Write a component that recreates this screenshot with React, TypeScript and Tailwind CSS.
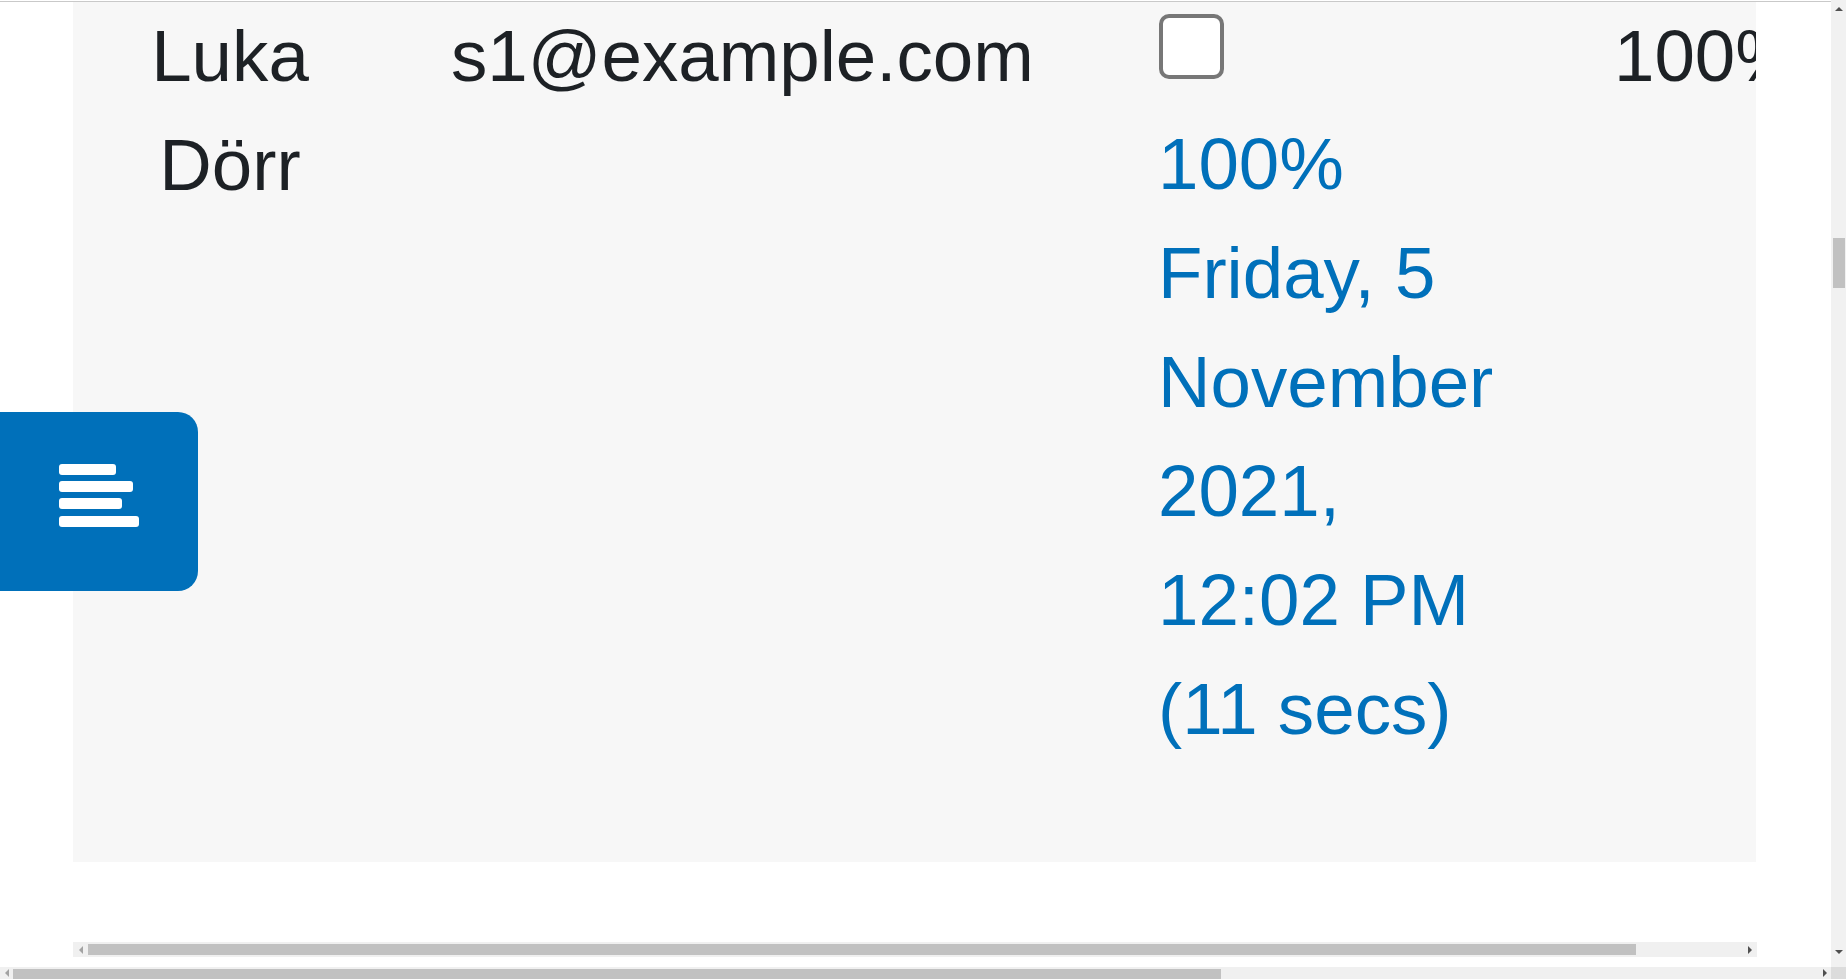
import React from "react";

function Arrow({ dir, color }: { dir: "up" | "down" | "left" | "right"; color: string }) {
  const pts =
    dir === "up"
      ? "0,4 4,0 8,4"
      : dir === "down"
      ? "0,0 8,0 4,4"
      : dir === "left"
      ? "4,0 4,8 0,4"
      : "0,0 0,8 4,4";
  const w = dir === "up" || dir === "down" ? 8 : 4;
  const h = dir === "up" || dir === "down" ? 4 : 8;
  return (
    <svg width={w} height={h} viewBox={`0 0 ${w} ${h}`}>
      <polygon points={pts} fill={color} />
    </svg>
  );
}

export default function App() {
  return (
    <div className="relative flex h-[979px] w-[1846px] flex-col overflow-hidden bg-white font-['Liberation_Sans',Arial,sans-serif]">
      <div className="flex h-[967px]">
        {/* main viewport */}
        <div className="relative flex w-[1831px] flex-col">
          <div className="h-px bg-white" />
          <div className="h-px bg-[#c9c9c9]" />
          {/* table panel */}
          <div className="ml-[73px] h-[860px] w-[1683px] overflow-hidden bg-[#f7f7f7]">
            <div className="flex w-max text-[72.7px] text-[#1d2125]">
              <div className="w-[314px] px-[20px] text-center leading-[109px] -mt-[1.5px]">Luka Dörr</div>
              <div className="w-[706px] pl-[64px] whitespace-nowrap leading-[109px] -mt-[1.5px]">s1@example.com</div>
              <div className="flex w-[455px] flex-col pl-[65px] pt-[12px]">
                <div className="ml-px h-[65px] w-[65px] rounded-[10px] border-4 border-[#777777] bg-white" />
                <div className="mt-[30px] w-[350px] leading-[109px] text-[#0070ba]">
                  100% Friday, 5 November 2021, 12:02 PM (11 secs)
                </div>
              </div>
              <div className="pl-[66px] whitespace-nowrap leading-[109px] -mt-[1.5px]">100%</div>
              <div className="w-[400px]" />
            </div>
          </div>
          <div className="h-[80px]" />
          {/* inner horizontal scrollbar */}
          <div className="ml-[73px] flex h-[15px] w-[1684px] items-center bg-[#f0f0f0]">
            <div className="flex w-[15px] justify-center">
              <Arrow dir="left" color="#a3a3a3" />
            </div>
            <div className="h-[11px] w-[1548px] bg-[#c1c1c1]" />
            <div className="flex-1" />
            <div className="flex w-[15px] justify-center">
              <Arrow dir="right" color="#505050" />
            </div>
          </div>
          <div className="flex-1" />

          {/* floating drawer toggle */}
          <button className="absolute left-0 top-[412px] flex h-[179px] w-[198px] items-center justify-center rounded-r-[20px] bg-[#0070ba]">
            <svg width="80" height="63" viewBox="0 0 80 63" className="-mt-[12px]">
              <rect x="0" y="0" width="57" height="11" rx="3" fill="#fff" />
              <rect x="0" y="17" width="74" height="11" rx="3" fill="#fff" />
              <rect x="0" y="34" width="63" height="11" rx="3" fill="#fff" />
              <rect x="0" y="52" width="80" height="11" rx="3" fill="#fff" />
            </svg>
          </button>
        </div>
        {/* vertical scrollbar */}
        <div className="flex w-[15px] flex-col items-center bg-[#f1f1f1]">
          <div className="flex h-[15px] items-center justify-center pt-[2px]">
            <Arrow dir="up" color="#505050" />
          </div>
          <div className="h-[223px]" />
          <div className="h-[50px] w-[12px] bg-[#c1c1c1]" />
          <div className="flex-1" />
          <div className="flex h-[17px] items-start justify-center">
            <Arrow dir="down" color="#505050" />
          </div>
        </div>
      </div>
      {/* page horizontal scrollbar */}
      <div className="flex h-[12px]">
        <div className="flex w-[1831px] items-center bg-[#f0f0f0]">
          <div className="flex w-[13px] justify-center">
            <Arrow dir="left" color="#a3a3a3" />
          </div>
          <div className="mt-[2px] h-[10px] w-[1208px] self-start bg-[#c1c1c1]" />
          <div className="flex-1" />
          <div className="flex w-[13px] justify-center">
            <Arrow dir="right" color="#505050" />
          </div>
        </div>
        <div className="w-[15px] bg-[#dcdcdc]" />
      </div>
    </div>
  );
}
